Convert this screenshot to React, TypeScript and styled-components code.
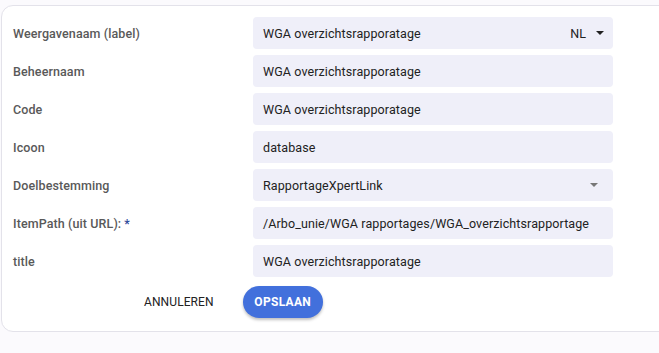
import React from "react";
import styled, { createGlobalStyle } from "styled-components";

const Global = createGlobalStyle`
  html, body { margin: 0; padding: 0; }
  body {
    background: #fbfafd;
    font-family: Roboto, "Liberation Sans", Arial, sans-serif;
    overflow: hidden;
    width: 659px;
    height: 353px;
  }
`;

const Card = styled.div`
  margin: 5px 0 0 1px;
  width: 720px;
  box-sizing: border-box;
  background: #ffffff;
  border: 1px solid #e3e2ea;
  border-radius: 12px;
  padding: 11px 0 13px 11px;
`;

const Form = styled.div`
  display: grid;
  grid-template-columns: 240px 360px;
  row-gap: 6px;
  align-items: center;
`;

const Label = styled.div`
  font-size: 12.5px;
  font-weight: 500;
  color: #595959;
  letter-spacing: 0.1px;
`;

const Req = styled.span`
  color: #2c4a9a;
  margin-left: 3px;
`;

const Field = styled.div`
  height: 32px;
  box-sizing: border-box;
  background: #efeff9;
  border-radius: 4px;
  display: flex;
  align-items: center;
  padding: 0 9px 0 10px;
  font-size: 12.5px;
  color: #222;
  letter-spacing: 0.1px;
`;

const Value = styled.span`
  flex: 1;
  white-space: nowrap;
`;

const Lang = styled.span`
  font-size: 12.5px;
  color: #222;
  margin-right: 10px;
`;

const Caret = styled.svg<{ $c: string; $end: number }>`
  width: 8px;
  height: 4px;
  fill: ${(p) => p.$c};
  margin-right: ${(p) => p.$end}px;
`;

const Actions = styled.div`
  display: flex;
  align-items: center;
  margin-top: 9px;
  padding-left: 115px;
  gap: 13px;
`;

const TextBtn = styled.button`
  border: none;
  background: transparent;
  font-family: inherit;
  font-size: 12px;
  color: #222;
  padding: 0 16px;
  height: 32px;
  letter-spacing: 0.1px;
`;

const PrimaryBtn = styled.button`
  border: none;
  background: #4270dc;
  color: #fff;
  font-family: inherit;
  font-weight: 700;
  font-size: 12px;
  letter-spacing: 0.3px;
  height: 32px;
  width: 80px;
  border-radius: 16px;
  box-shadow: 0 2px 3px rgba(0, 0, 0, 0.25);
`;

const Arrow = ({ c, end }: { c: string; end: number }) => (
  <Caret $c={c} $end={end} viewBox="0 0 8 4">
    <path d="M0 0 L8 0 L4 4 Z" />
  </Caret>
);

const rows: { label: string; value: string; lang?: boolean; select?: boolean; req?: boolean }[] = [
  { label: "Weergavenaam (label)", value: "WGA overzichtsrapporatage", lang: true },
  { label: "Beheernaam", value: "WGA overzichtsrapporatage" },
  { label: "Code", value: "WGA overzichtsrapporatage" },
  { label: "Icoon", value: "database" },
  { label: "Doelbestemming", value: "RapportageXpertLink", select: true },
  { label: "ItemPath (uit URL):", value: "/Arbo_unie/WGA rapportages/WGA_overzichtsrapportage", req: true },
  { label: "title", value: "WGA overzichtsrapporatage" },
];

export default function App() {
  return (
    <>
      <Global />
      <Card>
        <Form>
          {rows.map((r) => (
            <React.Fragment key={r.label}>
              <Label>
                {r.label}
                {r.req && <Req>*</Req>}
              </Label>
              <Field>
                <Value>{r.value}</Value>
                {r.lang && (
                  <>
                    <Lang>NL</Lang>
                    <Arrow c="#222" end={0} />
                  </>
                )}
                {r.select && <Arrow c="#777" end={6} />}
              </Field>
            </React.Fragment>
          ))}
        </Form>
        <Actions>
          <TextBtn>ANNULEREN</TextBtn>
          <PrimaryBtn>OPSLAAN</PrimaryBtn>
        </Actions>
      </Card>
    </>
  );
}
